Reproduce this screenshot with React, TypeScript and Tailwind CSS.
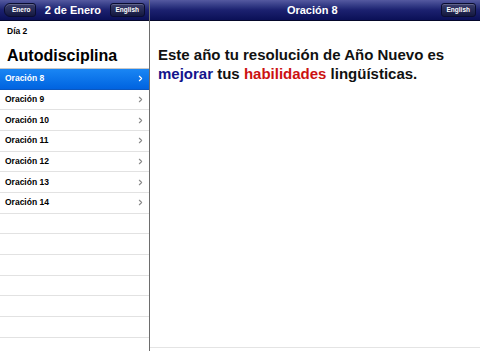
import { ChevronRight } from "lucide-react";

const ROWS = ["Oración 8", "Oración 9", "Oración 10", "Oración 11", "Oración 12", "Oración 13", "Oración 14"];
const EMPTY_ROWS = 7;

function NavButton({ label, back = false }: { label: string; back?: boolean }) {
  return (
    <div
      className={`h-[14px] flex items-center px-[5px] text-[6.5px] font-bold text-white rounded-[3px] border border-[#0a0d30] bg-gradient-to-b from-[#3b3f6e] to-[#14183f] shadow-[inset_0_1px_0_rgba(255,255,255,0.2)] ${
        back ? "pl-[7px] rounded-l-[6px]" : ""
      }`}
    >
      {label}
    </div>
  );
}

function Header({ children }: { children: React.ReactNode }) {
  return (
    <div className="h-[21px] shrink-0 flex items-center bg-gradient-to-b from-[#5559a0] via-[#1c2170] to-[#0b1057] border-b border-[#05082a] px-[4px]">
      {children}
    </div>
  );
}

export default function App() {
  return (
    <div className="w-[480px] h-[351px] flex bg-white overflow-hidden" style={{ fontFamily: '"Liberation Sans", Arial, sans-serif' }}>
      {/* Master pane */}
      <div className="w-[150px] shrink-0 flex flex-col border-r border-[#6d6d6d] overflow-hidden">
        <Header>
          <NavButton label="Enero" back />
          <span className="flex-1 text-center text-white text-[11px] font-bold">2 de Enero</span>
          <NavButton label="English" />
        </Header>
        <div className="h-[48px] shrink-0 flex flex-col px-[7px] pt-[4px] border-b border-[#c8c8c8]">
          <span className="text-[8.5px] font-bold text-black leading-[12px]">Día 2</span>
          <span className="text-[16px] font-bold text-black leading-[20px] mt-[9px]">Autodisciplina</span>
        </div>
        <div className="flex flex-col shrink-0">
          {ROWS.map((row, i) => (
            <div
              key={row}
              className={`h-[20.67px] flex items-center justify-between pl-[5px] pr-[4px] border-b ${
                i === 0 ? "bg-gradient-to-b from-[#1a86f4] to-[#0163e0] border-[#0a57c0] text-white" : "border-[#e2e2e2] text-black"
              }`}
            >
              <span className="text-[8.5px] font-bold">{row}</span>
              <ChevronRight size={9} strokeWidth={3} className={i === 0 ? "text-white" : "text-[#8a8a8a]"} />
            </div>
          ))}
          {Array.from({ length: EMPTY_ROWS }).map((_, i) => (
            <div key={i} className="h-[20.67px] border-b border-[#e2e2e2]" />
          ))}
        </div>
      </div>

      {/* Detail pane */}
      <div className="flex-1 flex flex-col">
        <Header>
          <span className="flex-1 text-center text-white text-[11px] font-bold pl-[30px]">Oración 8</span>
          <NavButton label="English" />
        </Header>
        <div className="flex-1 px-[8px] pt-[24px] border-b border-[#e4e4e4]">
          <p className="text-[15px] font-bold text-[#111] leading-[19px]">
            Este año tu resolución de Año Nuevo es{" "}
            <span className="text-[#14148c]">mejorar</span> tus{" "}
            <span className="text-[#cc1111]">habilidades</span> lingüísticas.
          </p>
        </div>
        <div className="h-[3px]" />
      </div>
    </div>
  );
}
